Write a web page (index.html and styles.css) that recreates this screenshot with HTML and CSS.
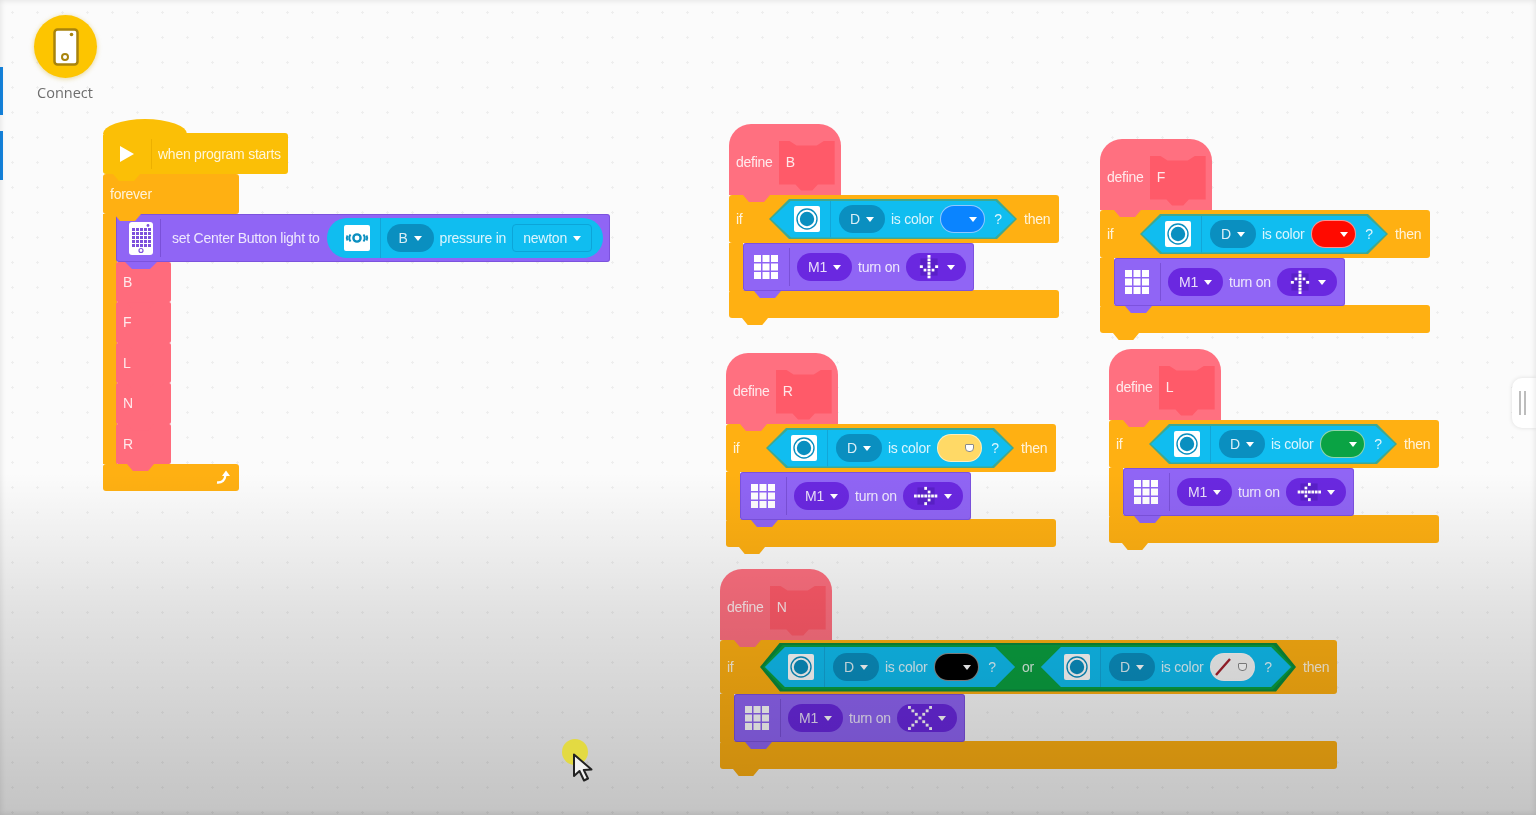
FILE: index.html
```html
<!DOCTYPE html>
<html>
<head>
    <meta charset="utf-8">
    <title>Blocks</title>
    <link rel="stylesheet" href="styles.css">
</head>
<body>
<svg class="defs" width="0" height="0">
    <symbol id="grid" viewBox="0 0 26 26">
        <g fill="#fff">
            <rect x="1" y="1" width="7" height="7"/><rect x="9.5" y="1" width="7" height="7"/><rect x="18" y="1" width="7" height="7"/>
            <rect x="1" y="9.5" width="7" height="7"/><rect x="9.5" y="9.5" width="7" height="7"/><rect x="18" y="9.5" width="7" height="7"/>
            <rect x="1" y="18" width="7" height="7"/><rect x="9.5" y="18" width="7" height="7"/><rect x="18" y="18" width="7" height="7"/>
        </g>
    </symbol>
    <symbol id="sensor" viewBox="0 0 26 26">
        <rect width="26" height="26" rx="2" fill="#fff"/>
        <circle cx="13" cy="13" r="10" fill="none" stroke="#0a8fc0" stroke-width="1.4"/>
        <circle cx="13" cy="13" r="7.2" fill="#0a8fc0"/>
    </symbol>
    <symbol id="led-arrow" viewBox="0 0 21 21">
        <rect x="3" y="3" width="15" height="15" fill="#5a20c8"/>
        <g fill="#fff">
            <rect x="9.2" y="0" width="2.6" height="2.4"/><rect x="9.2" y="3" width="2.6" height="2.4"/><rect x="9.2" y="6" width="2.6" height="2.4"/><rect x="9.2" y="9" width="2.6" height="2.4"/><rect x="9.2" y="12" width="2.6" height="2.4"/><rect x="9.2" y="15" width="2.6" height="2.4"/><rect x="9.2" y="18" width="2.6" height="2.4"/>
            <rect x="2.5" y="9" width="2.6" height="2.4"/><rect x="15.9" y="9" width="2.6" height="2.4"/>
            <rect x="5.8" y="12" width="2.4" height="2.4"/><rect x="12.8" y="12" width="2.4" height="2.4"/>
        </g>
    </symbol>
    <symbol id="led-cross" viewBox="0 0 21 21">
        <g fill="#fff">
            <rect x="0" y="0" width="2.5" height="2.5"/><rect x="3" y="3" width="2.5" height="2.5"/><rect x="6" y="6" width="2.5" height="2.5"/><rect x="9.2" y="9.2" width="2.6" height="2.6"/><rect x="12.5" y="12.5" width="2.5" height="2.5"/><rect x="15.5" y="15.5" width="2.5" height="2.5"/><rect x="18.5" y="18.5" width="2.5" height="2.5"/>
            <rect x="18.5" y="0" width="2.5" height="2.5"/><rect x="15.5" y="3" width="2.5" height="2.5"/><rect x="12.5" y="6" width="2.5" height="2.5"/><rect x="6" y="12.5" width="2.5" height="2.5"/><rect x="3" y="15.5" width="2.5" height="2.5"/><rect x="0" y="18.5" width="2.5" height="2.5"/>
        </g>
    </symbol>
</svg>

<div class="canvas">
    <span class="edge-tab edge-tab-one"></span>
    <span class="edge-tab edge-tab-two"></span>

    <div class="connect">
        <div class="connect-circle">
            <svg width="28" height="40" viewBox="0 0 28 40">
                <rect x="2.5" y="2.5" width="23" height="35" rx="3" fill="#fff" stroke="#a8830c" stroke-width="2.5"/>
                <circle cx="19.5" cy="7.5" r="1.8" fill="#a8830c"/>
                <circle cx="13" cy="30" r="3" fill="none" stroke="#a8830c" stroke-width="2"/>
            </svg>
        </div>
        <div class="connect-label">Connect</div>
    </div>

    <!-- main program -->
    <div class="stack stack-main">
        <div class="block when bump">
            <svg class="play" width="14" height="16" viewBox="0 0 14 16"><path d="M0 0L14 8L0 16Z" fill="#fff"/></svg>
            <span class="divider divider-yellow"></span>
            <span class="txt">when program starts</span>
        </div>
        <div class="block forever bump"><span class="txt">forever</span></div>
        <div class="arm">
            <div class="block light-row bump">
                <svg class="device" width="24" height="33" viewBox="0 0 24 33">
                    <rect width="24" height="33" rx="3" fill="#fff"/>
                    <circle cx="19" cy="3.5" r="1.4" fill="#7d50dc"/>
                    <g fill="#7d50dc">
                        <rect x="3" y="6" width="3" height="3"/><rect x="7" y="6" width="3" height="3"/><rect x="11" y="6" width="3" height="3"/><rect x="15" y="6" width="3" height="3"/><rect x="19" y="6" width="3" height="3"/>
                        <rect x="3" y="10" width="3" height="3"/><rect x="7" y="10" width="3" height="3"/><rect x="11" y="10" width="3" height="3"/><rect x="15" y="10" width="3" height="3"/><rect x="19" y="10" width="3" height="3"/>
                        <rect x="3" y="14" width="3" height="3"/><rect x="7" y="14" width="3" height="3"/><rect x="11" y="14" width="3" height="3"/><rect x="15" y="14" width="3" height="3"/><rect x="19" y="14" width="3" height="3"/>
                        <rect x="3" y="18" width="3" height="3"/><rect x="7" y="18" width="3" height="3"/><rect x="11" y="18" width="3" height="3"/><rect x="15" y="18" width="3" height="3"/><rect x="19" y="18" width="3" height="3"/>
                        <rect x="3" y="22" width="3" height="3"/><rect x="7" y="22" width="3" height="3"/><rect x="11" y="22" width="3" height="3"/><rect x="15" y="22" width="3" height="3"/><rect x="19" y="22" width="3" height="3"/>
                    </g>
                    <circle cx="12" cy="28.5" r="2" fill="none" stroke="#7d50dc" stroke-width="1.2"/>
                </svg>
                <span class="divider divider-purple"></span>
                <span class="txt light-text">set Center Button light to</span>
                <div class="pressure">
                    <svg class="pressure-icon" width="26" height="26" viewBox="0 0 26 26">
                        <rect width="26" height="26" rx="2" fill="#fff"/>
                        <circle cx="13" cy="13" r="3.6" fill="none" stroke="#0a8fc0" stroke-width="2.4"/>
                        <path d="M6.5 9.5Q4 13 6.5 16.5M19.5 9.5Q22 13 19.5 16.5M3.5 10.5Q2 13 3.5 15.5M22.5 10.5Q24 13 22.5 15.5" fill="none" stroke="#0a8fc0" stroke-width="2"/>
                    </svg>
                    <span class="divider divider-blue"></span>
                    <span class="pill pill-blue pill-port"><span class="txt">B</span><i class="caret"></i></span>
                    <span class="txt pressure-label">pressure in</span>
                    <span class="unit"><span class="txt">newton</span><i class="caret"></i></span>
                </div>
            </div>
            <div class="call bump"><span class="txt">B</span></div>
            <div class="call bump"><span class="txt">F</span></div>
            <div class="call bump"><span class="txt">L</span></div>
            <div class="call bump"><span class="txt">N</span></div>
            <div class="call bump"><span class="txt">R</span></div>
        </div>
        <div class="block forever-end">
            <svg width="16" height="16" viewBox="0 0 16 16"><path d="M2 13.5C7 14 10 11 10.5 6" fill="none" stroke="#fff" stroke-width="2.4"/><path d="M7 7L11 1.5L15 7Z" fill="#fff"/></svg>
        </div>
    </div>

    <!-- define B -->
    <div class="stack def stack-b">
        <div class="hat bump"><span class="txt">define</span><div class="slot"><span class="txt">B</span></div></div>
        <div class="block if-row">
            <span class="txt if-label">if</span>
            <div class="hex"><div class="hex-in">
                <svg class="icon"><use href="#sensor"/></svg>
                <span class="divider divider-blue"></span>
                <span class="pill pill-blue pill-port"><span class="txt">D</span><i class="caret"></i></span>
                <span class="txt is-color">is color</span>
                <span class="swatch swatch-blue"><i class="caret"></i></span>
                <span class="txt question">?</span>
            </div></div>
            <span class="txt then">then</span>
        </div>
        <div class="arm">
            <div class="block turn-row bump">
                <svg class="icon"><use href="#grid"/></svg>
                <span class="divider divider-purple"></span>
                <span class="pill pill-purple pill-motor"><span class="txt">M1</span><i class="caret"></i></span>
                <span class="txt turn-on">turn on</span>
                <span class="pill pill-purple pill-led"><svg class="led"><use href="#led-arrow"/></svg><i class="caret"></i></span>
            </div>
        </div>
        <div class="block if-end bump"></div>
    </div>

    <!-- define F -->
    <div class="stack def stack-f">
        <div class="hat bump"><span class="txt">define</span><div class="slot"><span class="txt">F</span></div></div>
        <div class="block if-row">
            <span class="txt if-label">if</span>
            <div class="hex"><div class="hex-in">
                <svg class="icon"><use href="#sensor"/></svg>
                <span class="divider divider-blue"></span>
                <span class="pill pill-blue pill-port"><span class="txt">D</span><i class="caret"></i></span>
                <span class="txt is-color">is color</span>
                <span class="swatch swatch-red"><i class="caret"></i></span>
                <span class="txt question">?</span>
            </div></div>
            <span class="txt then">then</span>
        </div>
        <div class="arm">
            <div class="block turn-row bump">
                <svg class="icon"><use href="#grid"/></svg>
                <span class="divider divider-purple"></span>
                <span class="pill pill-purple pill-motor"><span class="txt">M1</span><i class="caret"></i></span>
                <span class="txt turn-on">turn on</span>
                <span class="pill pill-purple pill-led"><svg class="led led-up"><use href="#led-arrow"/></svg><i class="caret"></i></span>
            </div>
        </div>
        <div class="block if-end bump"></div>
    </div>

    <!-- define R -->
    <div class="stack def stack-r">
        <div class="hat bump"><span class="txt">define</span><div class="slot"><span class="txt">R</span></div></div>
        <div class="block if-row">
            <span class="txt if-label">if</span>
            <div class="hex"><div class="hex-in">
                <svg class="icon"><use href="#sensor"/></svg>
                <span class="divider divider-blue"></span>
                <span class="pill pill-blue pill-port"><span class="txt">D</span><i class="caret"></i></span>
                <span class="txt is-color">is color</span>
                <span class="swatch swatch-yellow"><i class="caret caret-hollow"></i></span>
                <span class="txt question">?</span>
            </div></div>
            <span class="txt then">then</span>
        </div>
        <div class="arm">
            <div class="block turn-row bump">
                <svg class="icon"><use href="#grid"/></svg>
                <span class="divider divider-purple"></span>
                <span class="pill pill-purple pill-motor"><span class="txt">M1</span><i class="caret"></i></span>
                <span class="txt turn-on">turn on</span>
                <span class="pill pill-purple pill-led"><svg class="led led-right"><use href="#led-arrow"/></svg><i class="caret"></i></span>
            </div>
        </div>
        <div class="block if-end bump"></div>
    </div>

    <!-- define L -->
    <div class="stack def stack-l">
        <div class="hat bump"><span class="txt">define</span><div class="slot"><span class="txt">L</span></div></div>
        <div class="block if-row">
            <span class="txt if-label">if</span>
            <div class="hex"><div class="hex-in">
                <svg class="icon"><use href="#sensor"/></svg>
                <span class="divider divider-blue"></span>
                <span class="pill pill-blue pill-port"><span class="txt">D</span><i class="caret"></i></span>
                <span class="txt is-color">is color</span>
                <span class="swatch swatch-green"><i class="caret"></i></span>
                <span class="txt question">?</span>
            </div></div>
            <span class="txt then">then</span>
        </div>
        <div class="arm">
            <div class="block turn-row bump">
                <svg class="icon"><use href="#grid"/></svg>
                <span class="divider divider-purple"></span>
                <span class="pill pill-purple pill-motor"><span class="txt">M1</span><i class="caret"></i></span>
                <span class="txt turn-on">turn on</span>
                <span class="pill pill-purple pill-led"><svg class="led led-left"><use href="#led-arrow"/></svg><i class="caret"></i></span>
            </div>
        </div>
        <div class="block if-end bump"></div>
    </div>

    <!-- define N -->
    <div class="stack def stack-n">
        <div class="hat bump"><span class="txt">define</span><div class="slot"><span class="txt">N</span></div></div>
        <div class="block if-row if-row-tall">
            <span class="txt if-label">if</span>
            <div class="hex-or"><div class="hex-or-in">
                <div class="hex hex-inner"><div class="hex-in">
                    <svg class="icon"><use href="#sensor"/></svg>
                    <span class="divider divider-blue"></span>
                    <span class="pill pill-blue pill-port"><span class="txt">D</span><i class="caret"></i></span>
                    <span class="txt is-color">is color</span>
                    <span class="swatch swatch-black"><i class="caret"></i></span>
                    <span class="txt question">?</span>
                </div></div>
                <span class="txt or">or</span>
                <div class="hex hex-inner"><div class="hex-in">
                    <svg class="icon"><use href="#sensor"/></svg>
                    <span class="divider divider-blue"></span>
                    <span class="pill pill-blue pill-port"><span class="txt">D</span><i class="caret"></i></span>
                    <span class="txt is-color">is color</span>
                    <span class="swatch swatch-none"><svg width="20" height="20" viewBox="0 0 20 20"><path d="M3 18L17 2" stroke="#a3202c" stroke-width="2.4"/></svg><i class="caret caret-hollow"></i></span>
                    <span class="txt question">?</span>
                </div></div>
            </div></div>
            <span class="txt then">then</span>
        </div>
        <div class="arm">
            <div class="block turn-row bump">
                <svg class="icon"><use href="#grid"/></svg>
                <span class="divider divider-purple"></span>
                <span class="pill pill-purple pill-motor"><span class="txt">M1</span><i class="caret"></i></span>
                <span class="txt turn-on">turn on</span>
                <span class="pill pill-purple pill-led"><svg class="led"><use href="#led-cross"/></svg><i class="caret"></i></span>
            </div>
        </div>
        <div class="block if-end bump"></div>
    </div>

    <div class="drawer-handle"><i></i><i></i></div>

    <div class="shade"></div>

    <div class="pointer">
        <span class="pointer-halo"></span>
        <svg class="pointer-arrow" width="22" height="30" viewBox="0 0 22 30">
            <path d="M2 1.5V23L7.5 18L12 27.5L16 25.5L11.8 17L19.5 16.5Z" fill="#f2f2f2" stroke="#222" stroke-width="2" stroke-linejoin="round"/>
        </svg>
    </div>
</div>
</body>
</html>
```

FILE: styles.css
```css
html, body {
    margin: 0;
    height: 100%;
    overflow: hidden;
}

body {
    font-family: "Liberation Sans", Arial, sans-serif;
    background-color: #fafafa;
}

.defs {
    position: absolute;
}

.canvas {
    position: relative;
    height: 815px;
    overflow: hidden;
    background-color: #fbfbfb;
    background-image: radial-gradient(circle, #eeeeee 1px, transparent 1.4px);
    background-size: 25px 25px;
    filter: blur(0.7px);
}

/* toolbox tabs peeking in from the left edge */
.edge-tab {
    position: absolute;
    left: 0;
    width: 3px;
    background-color: #1585e0;
}
.edge-tab-one {
    top: 67px;
    height: 48px;
}
.edge-tab-two {
    top: 131px;
    height: 49px;
}

.connect {
    position: absolute;
    left: 30px;
    top: 15px;
    width: 70px;
    text-align: center;
}
.connect-circle {
    display: flex;
    align-items: center;
    justify-content: center;
    width: 63px;
    height: 63px;
    margin-left: 4px;
    border-radius: 50%;
    background-color: #fdc500;
    box-shadow: 0 1px 5px rgba(200, 160, 0, 0.4);
}
.connect-label {
    margin-top: 6px;
    font-family: "Open Sans", sans-serif;
    font-size: 14.5px;
    line-height: 18px;
    color: #6e6e6e;
}

/* ---- blocks ---- */
.stack {
    position: absolute;
}
.stack-main { left: 103px; top: 133px; width: 507px; }
.def { width: 330px; }
.stack-b { left: 729px; top: 124px; }
.stack-f { left: 1100px; top: 139px; }
.stack-r { left: 726px; top: 353px; }
.stack-l { left: 1109px; top: 349px; }
.stack-n { left: 720px; top: 569px; width: 617px; }

.block {
    position: relative;
    display: flex;
    align-items: center;
    box-sizing: border-box;
    border-radius: 3px;
}

.txt {
    font-size: 14px;
    letter-spacing: -0.25px;
    line-height: 18px;
    color: rgba(255, 255, 255, 0.85);
    white-space: nowrap;
}

.bump::after {
    content: "";
    position: absolute;
    z-index: 2;
    top: 100%;
    left: 11px;
    width: 27px;
    height: 7px;
    background-color: inherit;
    clip-path: polygon(0 0, 100% 0, 78% 100%, 22% 100%);
}

.divider {
    flex: none;
    width: 1px;
    align-self: stretch;
    margin: 4px 0;
}
.divider-yellow { background-color: #ecb000; margin: 6px 0 5px 17px; }
.divider-purple { background-color: #7a50d8; margin: 5px 7px 5px 10px; }
.divider-blue { background-color: #12a6d8; margin: 0 8px 0 10px; }

.when {
    width: 185px;
    height: 41px;
    padding-left: 17px;
    background-color: #fbbf06;
}
.when::before {
    content: "";
    position: absolute;
    left: 0;
    bottom: 100%;
    width: 84px;
    height: 15px;
    margin-bottom: -1px;
    border-radius: 50% 50% 0 0 / 100% 100% 0 0;
    background-color: #fbbf06;
}
.when .txt {
    margin-left: 6px;
}
.when.bump::after {
    left: 10px;
    z-index: 3;
}

.forever {
    width: 136px;
    height: 40px;
    padding-left: 7px;
    background-color: #ffb012;
}
.forever-end {
    justify-content: flex-end;
    width: 136px;
    height: 27px;
    padding-right: 8px;
    background-color: #ffb012;
}

.arm {
    position: relative;
    z-index: 1;
    background: linear-gradient(#ffb012, #ffb012) left top / 14px 100% no-repeat;
    padding-left: 13px;
}
.def .arm {
    padding-left: 14px;
}

.light-row {
    width: 494px;
    height: 48px;
    padding-left: 13px;
    background-color: #9065f5;
    box-shadow: inset 0 0 0 1px rgba(80, 40, 170, 0.3);
}
.light-row.bump::after {
    left: 9px;
    width: 32px;
}
.device { flex: none; }
.light-row .divider-purple { margin: 5px 0 5px 7px; }
.light-text { margin-left: 11px; }
.pressure {
    display: flex;
    align-items: center;
    box-sizing: border-box;
    width: 276px;
    height: 40px;
    margin-left: 7px;
    padding-left: 17px;
    border-radius: 20px;
    background-color: #10bdf0;
}
.pressure-label { margin-left: 6px; }
.pressure-icon { flex: none; }
.pressure .divider-blue { margin: 0 6px 0 10px; }
.unit {
    display: flex;
    align-items: center;
    justify-content: center;
    gap: 6px;
    box-sizing: border-box;
    width: 80px;
    height: 28px;
    margin-left: 6px;
    border: 1px solid #0ca5d8;
    border-radius: 4px;
}

.call {
    position: relative;
    box-sizing: border-box;
    width: 55px;
    height: 40.4px;
    padding: 11px 0 0 7px;
    background-color: #ff6b7c;
    border-radius: 2px;
}

.hat {
    position: relative;
    display: flex;
    align-items: center;
    box-sizing: border-box;
    width: 112px;
    height: 71px;
    padding: 4px 0 0 7px;
    border-radius: 22px 22px 0 0;
    background-color: #ff7080;
}
.hat.bump::after {
    left: 14px;
    z-index: 3;
}
.slot {
    box-sizing: border-box;
    width: 56px;
    height: 50px;
    margin: 8px 0 0 6px;
    padding: 12px 0 0 7px;
    background-color: #ff5a69;
    clip-path: polygon(0 0, 18% 0, 32% 10%, 68% 10%, 82% 0, 100% 0, 100% 88%, 70% 88%, 60% 100%, 40% 100%, 30% 88%, 0 88%);
}

.if-row {
    height: 48px;
    padding-left: 7px;
    background-color: #ffb012;
}
.if-row-tall {
    height: 54px;
}
.if-label {
    flex: none;
    width: 33px;
}
.then {
    margin-left: 7px;
}
.if-end {
    height: 28px;
    margin-top: -1px;
    background-color: #ffb012;
}
.if-end.bump::after {
    left: 13px;
    width: 26px;
}

.hex, .hex-in, .hex-or, .hex-or-in {
    clip-path: polygon(20px 0, calc(100% - 20px) 0, 100% 50%, calc(100% - 20px) 100%, 20px 100%, 0 50%);
}
.hex {
    box-sizing: border-box;
    flex: none;
    width: 248px;
    height: 40px;
    padding: 1.5px 2px;
    background-color: #3fa890;
}
.hex-in {
    display: flex;
    align-items: center;
    height: 100%;
    padding-left: 23px;
    background-color: #10bdf0;
}
.hex-or {
    flex: none;
    box-sizing: border-box;
    width: 536px;
    height: 49px;
    padding: 2px 3px;
    background-color: #0a8a3c;
}
.hex-or-in {
    display: flex;
    align-items: center;
    height: 100%;
    padding: 0 2px;
    background-color: #0aa040;
}
.hex.hex-inner {
    width: 250px;
    background-color: #10bdf0;
    padding: 0;
}
.or {
    flex: 1;
    text-align: center;
}

.icon {
    flex: none;
    width: 26px;
    height: 26px;
}

.pill {
    display: flex;
    align-items: center;
    justify-content: center;
    flex: none;
    box-sizing: border-box;
    height: 28px;
    border-radius: 14px;
}
.pill-blue { background-color: #0a8fc0; }
.pill-purple { background-color: #6a28e0; }
.pill-port { gap: 6px; width: 46px; }
.pill-motor { gap: 6px; width: 55px; }
.pill-led { gap: 6px; width: 60px; margin-left: 6px; }
.pressure .pill-port { width: 47px; }

.turn-row {
    width: 231px;
    height: 48px;
    padding-left: 10px;
    background-color: #9065f5;
    box-shadow: inset 0 0 0 1px rgba(80, 40, 170, 0.3);
}
.turn-on { margin-left: 6px; }
.turn-row.bump::after { left: 11px; }
.led {
    width: 24px;
    height: 24px;
}
.led-up { transform: rotate(180deg); }
.led-right { transform: rotate(-90deg); }
.led-left { transform: rotate(90deg); }

.is-color { margin-left: 6px; }
.question { margin-left: 9px; }

.swatch {
    display: flex;
    align-items: center;
    justify-content: flex-end;
    flex: none;
    box-sizing: border-box;
    width: 45px;
    height: 28px;
    margin-left: 7px;
    padding-right: 7px;
    border: 1.5px solid rgba(255, 255, 255, 0.55);
    border-radius: 14px;
}
.swatch-blue { background-color: #0a84ff; }
.swatch-red { background-color: #ff0a00; }
.swatch-yellow { background-color: #ffd966; }
.swatch-green { background-color: #0aa344; }
.swatch-black { background-color: #000; }
.swatch-none {
    justify-content: space-between;
    padding: 0 7px 0 2px;
    background-color: #f6f6f6;
}

.caret {
    flex: none;
    width: 0;
    height: 0;
    border-left: 4.5px solid transparent;
    border-right: 4.5px solid transparent;
    border-top: 5px solid #fff;
}
.caret-hollow {
    width: 7px;
    height: 6px;
    border: 1.5px solid #8a8a8a;
    border-radius: 1px 1px 4px 4px;
    background-color: #fff;
}

.drawer-handle {
    position: absolute;
    top: 378px;
    right: 0;
    display: flex;
    align-items: center;
    gap: 3px;
    box-sizing: border-box;
    width: 24px;
    height: 50px;
    padding-left: 7px;
    border-radius: 10px 0 0 10px;
    background-color: #fff;
    box-shadow: 0 0 4px rgba(0, 0, 0, 0.12);
}
.drawer-handle i {
    width: 2px;
    height: 24px;
    background-color: #bdbdbd;
}

/* the video fade over the lower part of the screen */
.shade {
    position: absolute;
    inset: 0;
    z-index: 5;
    pointer-events: none;
    background: linear-gradient(to bottom, transparent 58%, rgba(0, 0, 0, 0.1) 75%, rgba(0, 0, 0, 0.22) 100%);
    box-shadow: inset 0 0 6px rgba(0, 0, 0, 0.12);
}

.pointer {
    position: absolute;
    z-index: 6;
    left: 562px;
    top: 739px;
}
.pointer-halo {
    display: block;
    width: 26px;
    height: 26px;
    border-radius: 50%;
    background-color: #e3da42;
}
.pointer-arrow {
    position: absolute;
    left: 10px;
    top: 14px;
}
```
